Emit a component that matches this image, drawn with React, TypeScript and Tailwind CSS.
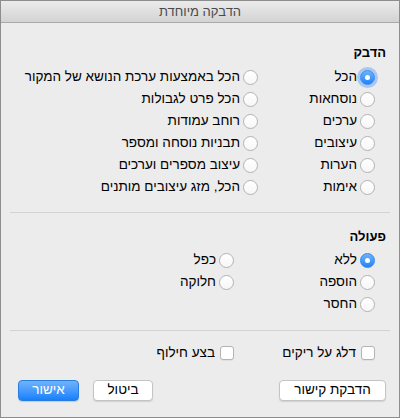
import React from "react";

const Radio = ({ checked = false, focus = false }: { checked?: boolean; focus?: boolean }) => (
  <span
    className={
      "relative flex h-[15px] w-[15px] shrink-0 items-center justify-center rounded-full border " +
      (checked
        ? "border-[#2f86f5] bg-gradient-to-b from-[#6cb3fa] to-[#1a84fb]"
        : "border-[#b3b3b3] bg-gradient-to-b from-white to-[#f7f7f7]") +
      (focus ? " shadow-[0_0_0_3px_rgba(120,170,240,0.55)]" : "")
    }
  >
    {checked && <span className="h-[5px] w-[5px] rounded-full bg-white" />}
  </span>
);

const Check = () => (
  <span className="h-[14px] w-[14px] shrink-0 rounded-[3px] border border-[#b3b3b3] bg-white shadow-[0_1px_0_rgba(0,0,0,0.05)]" />
);

const Item = ({
  label,
  checked,
  focus,
}: {
  label: string;
  checked?: boolean;
  focus?: boolean;
}) => (
  <div className="flex h-[22px] items-center gap-[3px]">
    <Radio checked={checked} focus={focus} />
    <span className="whitespace-nowrap">{label}</span>
  </div>
);

export default function App() {
  return (
    <div
      dir="rtl"
      className="flex h-[418px] w-[400px] flex-col border border-[#8d8d8d] bg-[#ececec] text-[13.5px] text-black"
      style={{ fontFamily: '"Liberation Sans", Arial, sans-serif' }}
    >
      <div className="flex h-[22px] shrink-0 items-center justify-center border-b border-[#a9a9a9] bg-gradient-to-b from-[#ebebeb] to-[#d3d3d3] text-[13px] text-[#4a4a4a]">
        הדבקה מיוחדת
      </div>

      <div className="flex flex-col pr-[13px] pl-[9px]">
        <div className="mt-[22px] h-[16px] text-[13px] font-bold leading-[16px]">הדבק</div>
        <div className="mt-[5px] flex pr-[11px]">
          <div className="flex w-[117px] flex-col">
            <Item label="הכל" checked focus />
            <Item label="נוסחאות" />
            <Item label="ערכים" />
            <Item label="עיצובים" />
            <Item label="הערות" />
            <Item label="אימות" />
          </div>
          <div className="flex flex-col">
            <Item label="הכל באמצעות ערכת הנושא של המקור" />
            <Item label="הכל פרט לגבולות" />
            <Item label="רוחב עמודות" />
            <Item label="תבניות נוסחה ומספר" />
            <Item label="עיצוב מספרים וערכים" />
            <Item label="הכל, מזג עיצובים מותנים" />
          </div>
        </div>

        <div className="mt-[14px] -mr-[4px] h-px bg-[#d3d3d3]" />

        <div className="mt-[16px] h-[16px] text-[13px] font-bold leading-[16px]">פעולה</div>
        <div className="mt-[4px] flex pr-[11px]">
          <div className="flex w-[141px] flex-col">
            <Item label="ללא" checked />
            <Item label="הוספה" />
            <Item label="החסר" />
          </div>
          <div className="flex flex-col">
            <Item label="כפל" />
            <Item label="חלוקה" />
          </div>
        </div>

        <div className="mt-[15px] -mr-[4px] h-px bg-[#d3d3d3]" />

        <div className="mt-[11px] flex h-[22px] pr-[11px]">
          <div className="flex w-[141px] items-center gap-[5px]">
            <Check />
            <span>דלג על ריקים</span>
          </div>
          <div className="flex items-center gap-[5px]">
            <Check />
            <span>בצע חילוף</span>
          </div>
        </div>

        <div className="mt-[16px] flex items-center pl-[8px]">
          <button className="flex h-[21px] w-[107px] items-center justify-center rounded-[4px] border border-[#c4c4c4] bg-white text-[13.5px] text-black shadow-[0_1px_1px_rgba(0,0,0,0.12)]">
            הדבקת קישור
          </button>
          <div className="flex-1" />
          <button className="flex h-[21px] w-[60px] items-center justify-center rounded-[4px] border border-[#c4c4c4] bg-white text-[13.5px] text-black shadow-[0_1px_1px_rgba(0,0,0,0.12)]">
            ביטול
          </button>
          <button className="mr-[14px] flex h-[21px] w-[61px] items-center justify-center rounded-[4px] border border-[#2a7de0] bg-gradient-to-b from-[#6db3fb] to-[#1180fb] text-[13.5px] text-white shadow-[0_1px_1px_rgba(0,0,0,0.15)]">
            אישור
          </button>
        </div>
      </div>
    </div>
  );
}
